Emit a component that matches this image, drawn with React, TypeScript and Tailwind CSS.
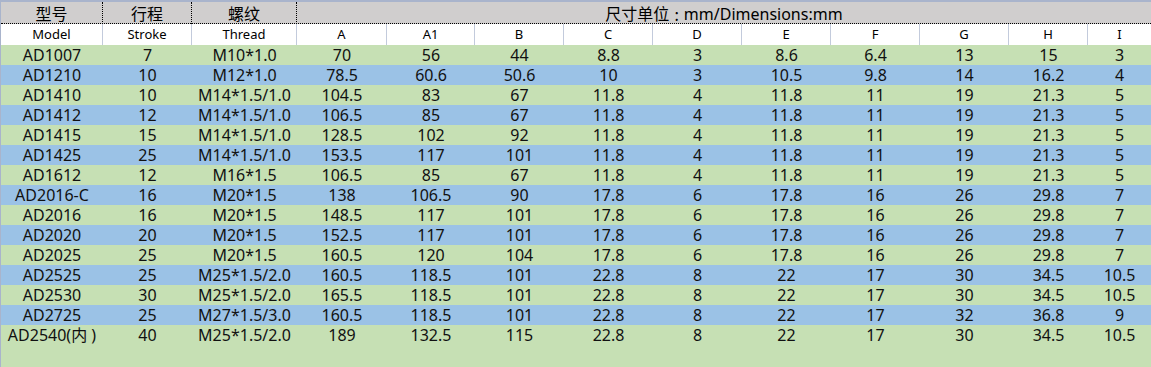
const cols = "grid grid-cols-[102px_89px_105px_90px_88px_89px_89px_89px_89px_89px_89px_79px_1fr]";

const labels = ["Model", "Stroke", "Thread", "A", "A1", "B", "C", "D", "E", "F", "G", "H", "I"];

const rows: string[][] = [
  ["AD1007", "7", "M10*1.0", "70", "56", "44", "8.8", "3", "8.6", "6.4", "13", "15", "3"],
  ["AD1210", "10", "M12*1.0", "78.5", "60.6", "50.6", "10", "3", "10.5", "9.8", "14", "16.2", "4"],
  ["AD1410", "10", "M14*1.5/1.0", "104.5", "83", "67", "11.8", "4", "11.8", "11", "19", "21.3", "5"],
  ["AD1412", "12", "M14*1.5/1.0", "106.5", "85", "67", "11.8", "4", "11.8", "11", "19", "21.3", "5"],
  ["AD1415", "15", "M14*1.5/1.0", "128.5", "102", "92", "11.8", "4", "11.8", "11", "19", "21.3", "5"],
  ["AD1425", "25", "M14*1.5/1.0", "153.5", "117", "101", "11.8", "4", "11.8", "11", "19", "21.3", "5"],
  ["AD1612", "12", "M16*1.5", "106.5", "85", "67", "11.8", "4", "11.8", "11", "19", "21.3", "5"],
  ["AD2016-C", "16", "M20*1.5", "138", "106.5", "90", "17.8", "6", "17.8", "16", "26", "29.8", "7"],
  ["AD2016", "16", "M20*1.5", "148.5", "117", "101", "17.8", "6", "17.8", "16", "26", "29.8", "7"],
  ["AD2020", "20", "M20*1.5", "152.5", "117", "101", "17.8", "6", "17.8", "16", "26", "29.8", "7"],
  ["AD2025", "25", "M20*1.5", "160.5", "120", "104", "17.8", "6", "17.8", "16", "26", "29.8", "7"],
  ["AD2525", "25", "M25*1.5/2.0", "160.5", "118.5", "101", "22.8", "8", "22", "17", "30", "34.5", "10.5"],
  ["AD2530", "30", "M25*1.5/2.0", "165.5", "118.5", "101", "22.8", "8", "22", "17", "30", "34.5", "10.5"],
  ["AD2725", "25", "M27*1.5/3.0", "160.5", "118.5", "101", "22.8", "8", "22", "17", "32", "36.8", "9"],
  ["AD2540(内 )", "40", "M25*1.5/2.0", "189", "132.5", "115", "22.8", "8", "22", "17", "30", "34.5", "10.5"],
];

export default function App() {
  return (
    <div
      className="w-[1151px] h-[367px] overflow-hidden bg-[#c6e0b4] border-t-2 border-l border-[#a9b4cc] text-[#111]"
      style={{ fontFamily: '"Noto Sans", "Noto Sans CJK SC", sans-serif' }}
    >
      {/* title row */}
      <div className="grid grid-cols-[102px_89px_105px_1fr] h-[22px] bg-[#d0cece] border-b border-dotted border-black text-[16px] text-black">
        <div className="flex items-center justify-center border-r border-dotted border-black">型号</div>
        <div className="flex items-center justify-center border-r border-dotted border-black">行程</div>
        <div className="flex items-center justify-center border-r border-dotted border-black">螺纹</div>
        <div className="flex items-center justify-center whitespace-pre">
          尺寸单位
          <span className="px-[5px] font-['Noto_Sans_CJK_SC',sans-serif]">:</span>
          mm/Dimensions:mm
        </div>
      </div>

      {/* english labels */}
      <div className={`${cols} h-[21px] bg-white text-[13px] text-black`}>
        {labels.map((l, i) => (
          <div
            key={l}
            className={
              i < labels.length - 1
                ? "flex items-center justify-center border-r border-[#c3cbdc]"
                : "flex items-center justify-center"
            }
          >
            {l}
          </div>
        ))}
      </div>

      {/* data */}
      {rows.map((r, idx) => (
        <div
          key={r[0]}
          className={`${cols} h-[20px] text-[16px] ${idx % 2 === 0 ? "bg-[#c6e0b4]" : "bg-[#9bc2e6]"}`}
        >
          {r.map((v, i) => (
            <div key={i} className="flex items-center justify-center whitespace-nowrap leading-none">
              {v}
            </div>
          ))}
        </div>
      ))}
    </div>
  );
}
